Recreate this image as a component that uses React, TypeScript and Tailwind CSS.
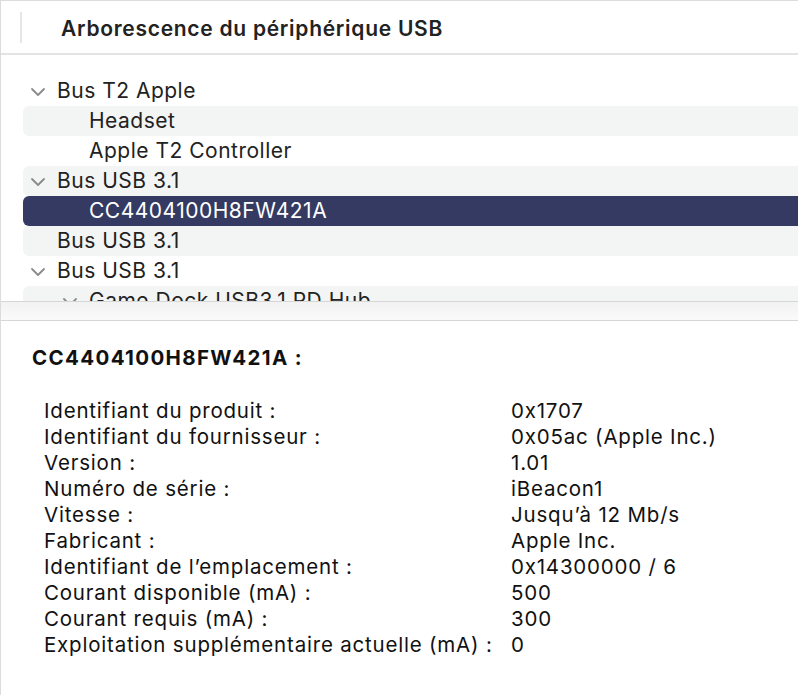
import React from "react";

type Row = { label: string; level: number; open?: boolean; stripe?: boolean; selected?: boolean };

const rows: Row[] = [
  { label: "Bus T2 Apple", level: 0, open: true },
  { label: "Headset", level: 1, stripe: true },
  { label: "Apple T2 Controller", level: 1 },
  { label: "Bus USB 3.1", level: 0, open: true, stripe: true },
  { label: "CC4404100H8FW421A", level: 1, selected: true },
  { label: "Bus USB 3.1", level: 0, stripe: true },
  { label: "Bus USB 3.1", level: 0, open: true },
  { label: "Game Dock USB3.1 PD Hub", level: 1, open: true, stripe: true },
];

const details: [string, string][] = [
  ["Identifiant du produit :", "0x1707"],
  ["Identifiant du fournisseur :", "0x05ac (Apple Inc.)"],
  ["Version :", "1.01"],
  ["Numéro de série :", "iBeacon1"],
  ["Vitesse :", "Jusqu’à 12 Mb/s"],
  ["Fabricant :", "Apple Inc."],
  ["Identifiant de l’emplacement :", "0x14300000 / 6"],
  ["Courant disponible (mA) :", "500"],
  ["Courant requis (mA) :", "300"],
  ["Exploitation supplémentaire actuelle (mA) :", "0"],
];

function Chevron() {
  return (
    <svg width="16" height="10" viewBox="0 0 16 10" className="shrink-0">
      <path d="M2 2 L8 8 L14 2" fill="none" stroke="#8a8a8a" strokeWidth="1.8" strokeLinecap="round" strokeLinejoin="round" />
    </svg>
  );
}

function TreeRow({ row }: { row: Row }) {
  const bg = row.selected ? "bg-[#353a62] text-white" : row.stripe ? "bg-[#f3f4f4] text-[#222]" : "text-[#222]";
  return (
    <div className={`ml-[22px] h-[30px] rounded-l-[6px] flex items-center relative whitespace-nowrap ${bg}`}>
      {row.open && (
        <span className={row.level === 0 ? "absolute left-[7px] top-[11px]" : "absolute left-[39px] top-[11px]"}>
          <Chevron />
        </span>
      )}
      <span className={row.level === 0 ? "pl-[34px]" : "pl-[66px]"}>{row.label}</span>
    </div>
  );
}

export default function App() {
  return (
    <div
      className="w-[798px] h-[695px] overflow-hidden bg-white border-l border-t border-[#dcdcdc] flex flex-col"
      style={{ fontFamily: "Inter, 'Noto Sans', sans-serif" }}
    >
      <div className="h-[54px] shrink-0 border-b-2 border-[#e3e3e3] flex items-center">
        <div className="ml-[19px] w-[2px] h-[31px] bg-[#e6e6e6]" />
        <div className="ml-[39px] mt-[3px] text-[21px] font-semibold text-[#222] tracking-[0.72px]">
          Arborescence du périphérique USB
        </div>
      </div>

      <div className="h-[246px] shrink-0 overflow-hidden pt-[21px] text-[21px] tracking-[0.5px]">
        {rows.map((r, i) => (
          <TreeRow key={i} row={r} />
        ))}
      </div>

      <div className="h-[20px] shrink-0 border-t border-b border-[#d6d6d6] bg-gradient-to-b from-[#f2f2f2] to-[#fafafa]" />

      <div className="pl-[31px] pt-[23px] text-[#111]">
        <div className="text-[20.5px] font-bold tracking-[1.35px] leading-[28px]">CC4404100H8FW421A :</div>
        <div className="mt-[26px] pl-[12px] grid grid-cols-[467px_1fr] text-[20.5px] leading-[26px] tracking-[0.8px]">
          {details.map(([k, v]) => (
            <React.Fragment key={k}>
              <div className="whitespace-nowrap">{k}</div>
              <div className="whitespace-nowrap">{v}</div>
            </React.Fragment>
          ))}
        </div>
      </div>
    </div>
  );
}
